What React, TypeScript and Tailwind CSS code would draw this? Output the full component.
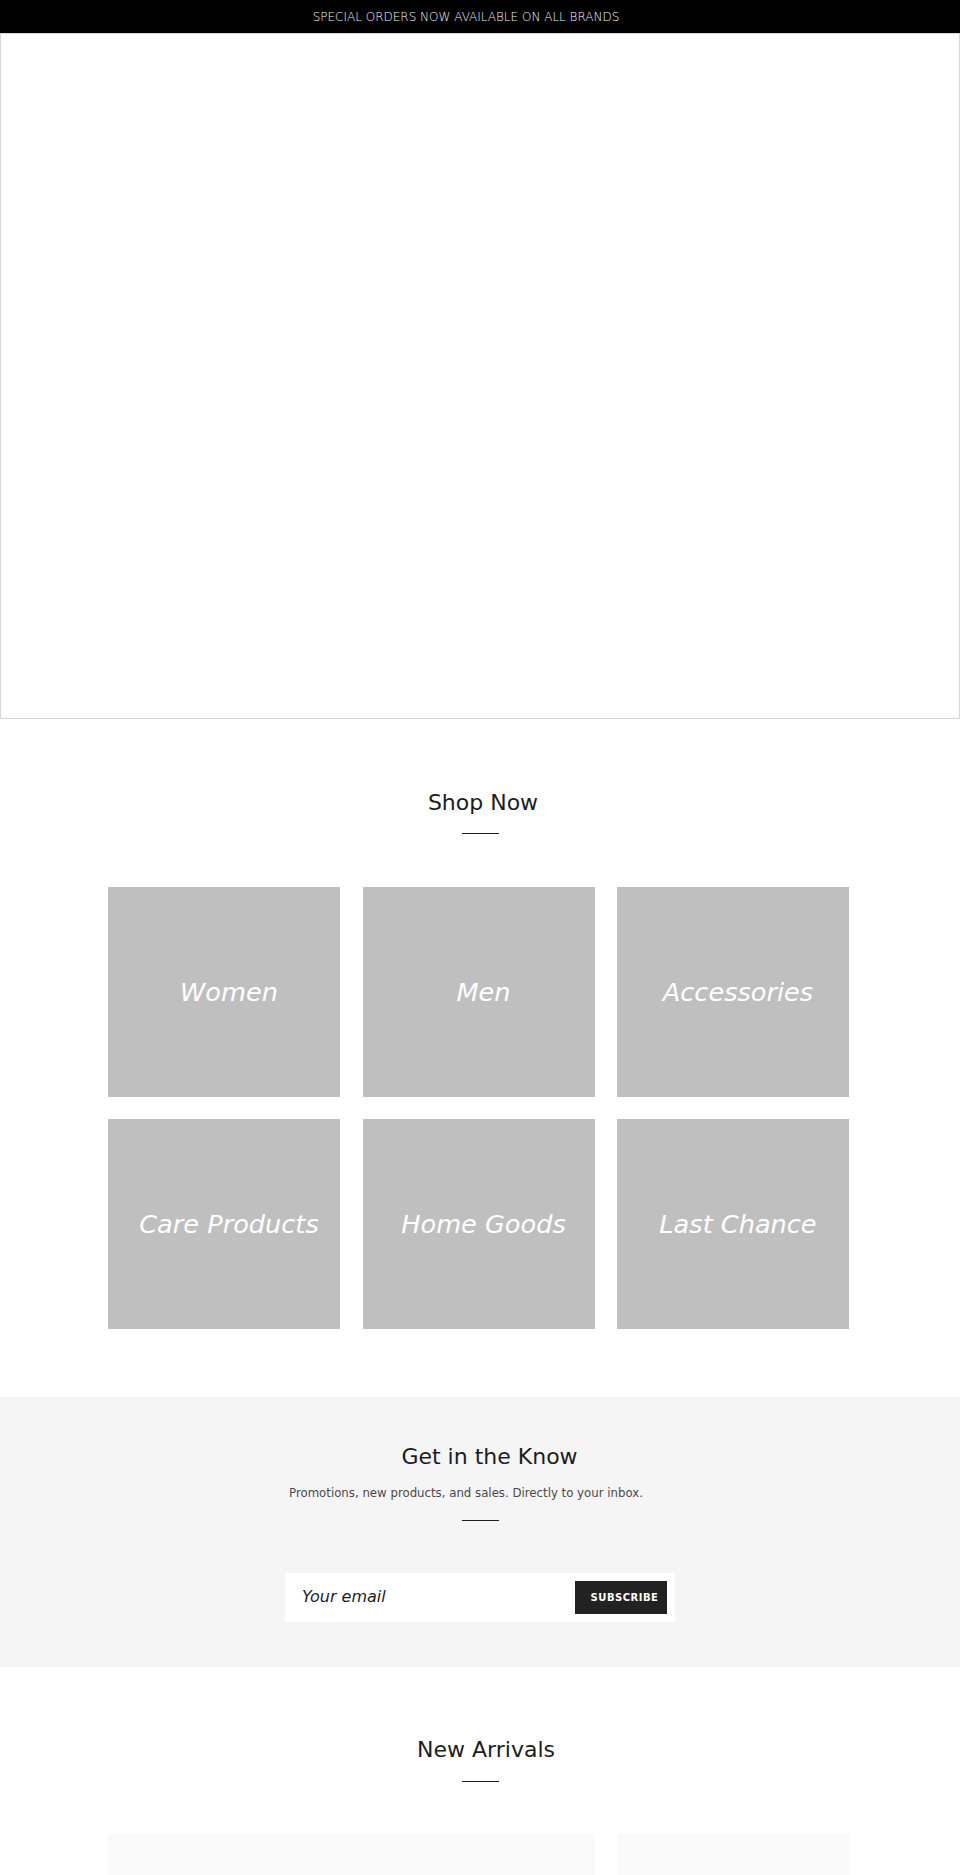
import React from "react";

const FONT = { fontFamily: '"DejaVu Sans", Verdana, sans-serif' };

const categories = [
  "Women",
  "Men",
  "Accessories",
  "Care Products",
  "Home Goods",
  "Last Chance",
];

function SectionHeading({ title, shift }: { title: string; shift: string }) {
  return (
    <div className="flex flex-col items-center">
      <h2 className={`text-[22px] leading-[26.4px] font-normal text-[#1c1d1d] ${shift}`}>{title}</h2>
      <div className="mt-[17px] h-px w-[37px] bg-[#1c1d1d]" />
    </div>
  );
}

export default function App() {
  return (
    <div className="min-h-[1875px] bg-white" style={FONT}>
      {/* announcement bar */}
      <div className="flex h-[33px] items-center justify-center bg-black pr-[28px]">
        <p className="text-[12px] font-extralight leading-none text-[#f2f2f2]">
          SPECIAL ORDERS NOW AVAILABLE ON ALL BRANDS
        </p>
      </div>

      {/* hero slideshow placeholder */}
      <div className="h-[686px] w-full border border-[#d6d6d6] bg-white" />

      {/* shop now collections */}
      <section className="pt-[71px] pb-[68px]">
        <SectionHeading title="Shop Now" shift="pl-[6px]" />
        <div className="ml-[108px] mt-[53px] grid w-[741px] grid-cols-[232px_232px_232px] gap-x-[22.5px] gap-y-[22px]">
          {categories.map((c) => (
            <a
              key={c}
              href="#"
              className="flex h-[210px] items-center justify-center bg-[#bfbfbf] pl-[10px]"
            >
              <span className="text-[25.6px] italic leading-none text-white">{c}</span>
            </a>
          ))}
        </div>
      </section>

      {/* newsletter */}
      <section className="flex h-[270px] flex-col items-center bg-[#f5f5f5] pt-[47px]">
        <h2 className="pl-[19px] text-[22px] leading-[26.4px] font-normal text-[#1c1d1d]">Get in the Know</h2>
        <p className="mt-[13px] pr-[28px] text-[11.75px] leading-[18px] text-[#4a4a4a]">
          Promotions, new products, and sales. Directly to your inbox.
        </p>
        <div className="mt-[18px] h-px w-[37px] bg-[#1c1d1d]" />
        <form className="mt-[52px] flex h-[49px] w-[390px] items-center bg-white pl-[17px] pr-[8px]">
          <input
            type="email"
            placeholder="Your email"
            className="min-w-0 flex-1 bg-transparent text-[16px] italic text-[#1c1d1d] placeholder:text-[#1c1d1d] outline-none"
          />
          <button
            type="button"
            className="flex h-[33px] w-[92px] items-center justify-center bg-[#222222] pl-[7px] text-[10px] font-bold tracking-[0.5px] text-white"
          >
            SUBSCRIBE
          </button>
        </form>
      </section>

      {/* new arrivals */}
      <section className="pt-[70px]">
        <SectionHeading title="New Arrivals" shift="pl-[12px]" />
        <div className="ml-[108px] mt-[52px] grid w-[741px] grid-cols-[232px_232px_232px] gap-x-[22.5px]">
          <div className="col-span-2 h-[420px] bg-[#fafafa]" />
          <div className="h-[420px] bg-[#fafafa]" />
        </div>
      </section>
    </div>
  );
}
